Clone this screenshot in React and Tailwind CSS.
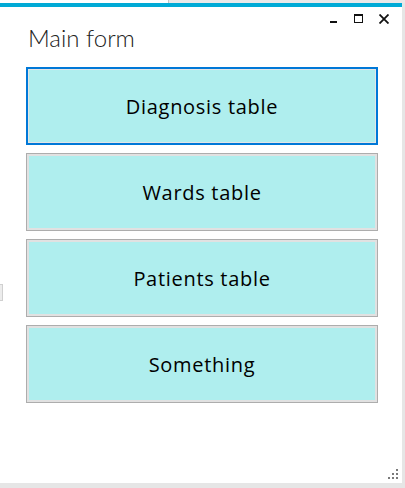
import React from "react";

const buttons = ["Diagnosis table", "Wards table", "Patients table", "Something"];

export default function App() {
  return (
    <div className="relative w-[405px] h-[488px] bg-[#e6e6e6] overflow-hidden flex flex-col">
      {/* desktop strip above the window */}
      <div className="flex h-[3px] shrink-0">
        <div className="w-[168px] bg-white" />
        <div className="flex-1 bg-[#e9e9e9] border-l border-[#c4c4c4]" />
      </div>
      {/* window */}
      <div className="relative w-[402px] h-[480px] bg-white flex flex-col">
        <div className="h-[4px] bg-[#00aad6] shrink-0" />
        {/* header */}
        <div className="flex justify-between h-[60px] shrink-0">
          <div
            className="pl-[28px] pt-[19px] text-[24px] leading-none font-light text-[#222]"
            style={{ fontFamily: "'Lato', 'Open Sans', sans-serif" }}
          >
            Main form
          </div>
          <div className="flex items-start gap-[16px] pt-[7px] pr-[13px]">
            <svg width="7" height="9" viewBox="0 0 7 9">
              <rect x="0" y="7" width="7" height="2" fill="#111" />
            </svg>
            <svg width="10" height="9" viewBox="0 0 10 9">
              <rect x="1.5" y="0.5" width="8" height="8" fill="none" stroke="#111" strokeWidth="1" />
              <rect x="1" y="0" width="9" height="2" fill="#111" />
            </svg>
            <svg width="10" height="10" viewBox="0 0 10 10">
              <path d="M0.5 0.5 L9.5 9.5 M9.5 0.5 L0.5 9.5" stroke="#111" strokeWidth="1.8" />
            </svg>
          </div>
        </div>
        {/* buttons */}
        <div className="flex flex-col gap-[8px] pl-[26px]">
          {buttons.map((b, i) => (
            <div
              key={b}
              className={
                "w-[352px] h-[78px] flex items-center justify-center text-[20px] text-black " +
                (i === 0
                  ? "border-2 border-[#0078d7]"
                  : "border border-[#adadad]")
              }
              style={{ fontFamily: "'Open Sans', 'Lato', sans-serif" }}
            >
              <div
                className={
                  "w-full h-full flex items-center justify-center bg-[#afeeee] tracking-[0.7px] pt-[2px] " +
                  (i === 0 ? "border border-[#e5e5e5]" : "border-2 border-[#e1e1e1]")
                }
              >
                {b}
              </div>
            </div>
          ))}
        </div>
        {/* resize grip */}
        <div className="absolute right-[4px] bottom-[4px] w-[10px] h-[10px]">
          <svg width="10" height="10" viewBox="0 0 10 10">
            <rect x="8" y="0" width="2" height="2" fill="#7a7a7a" />
            <rect x="8" y="4" width="2" height="2" fill="#7a7a7a" />
            <rect x="4" y="4" width="2" height="2" fill="#7a7a7a" />
            <rect x="8" y="8" width="2" height="2" fill="#7a7a7a" />
            <rect x="4" y="8" width="2" height="2" fill="#7a7a7a" />
            <rect x="0" y="8" width="2" height="2" fill="#7a7a7a" />
          </svg>
        </div>
        {/* left edge artifact */}
        <div className="absolute left-0 top-[281px] w-[3px] h-[17px] bg-[#ececec] border-y border-r border-[#d0d0d0]" />
      </div>
    </div>
  );
}
